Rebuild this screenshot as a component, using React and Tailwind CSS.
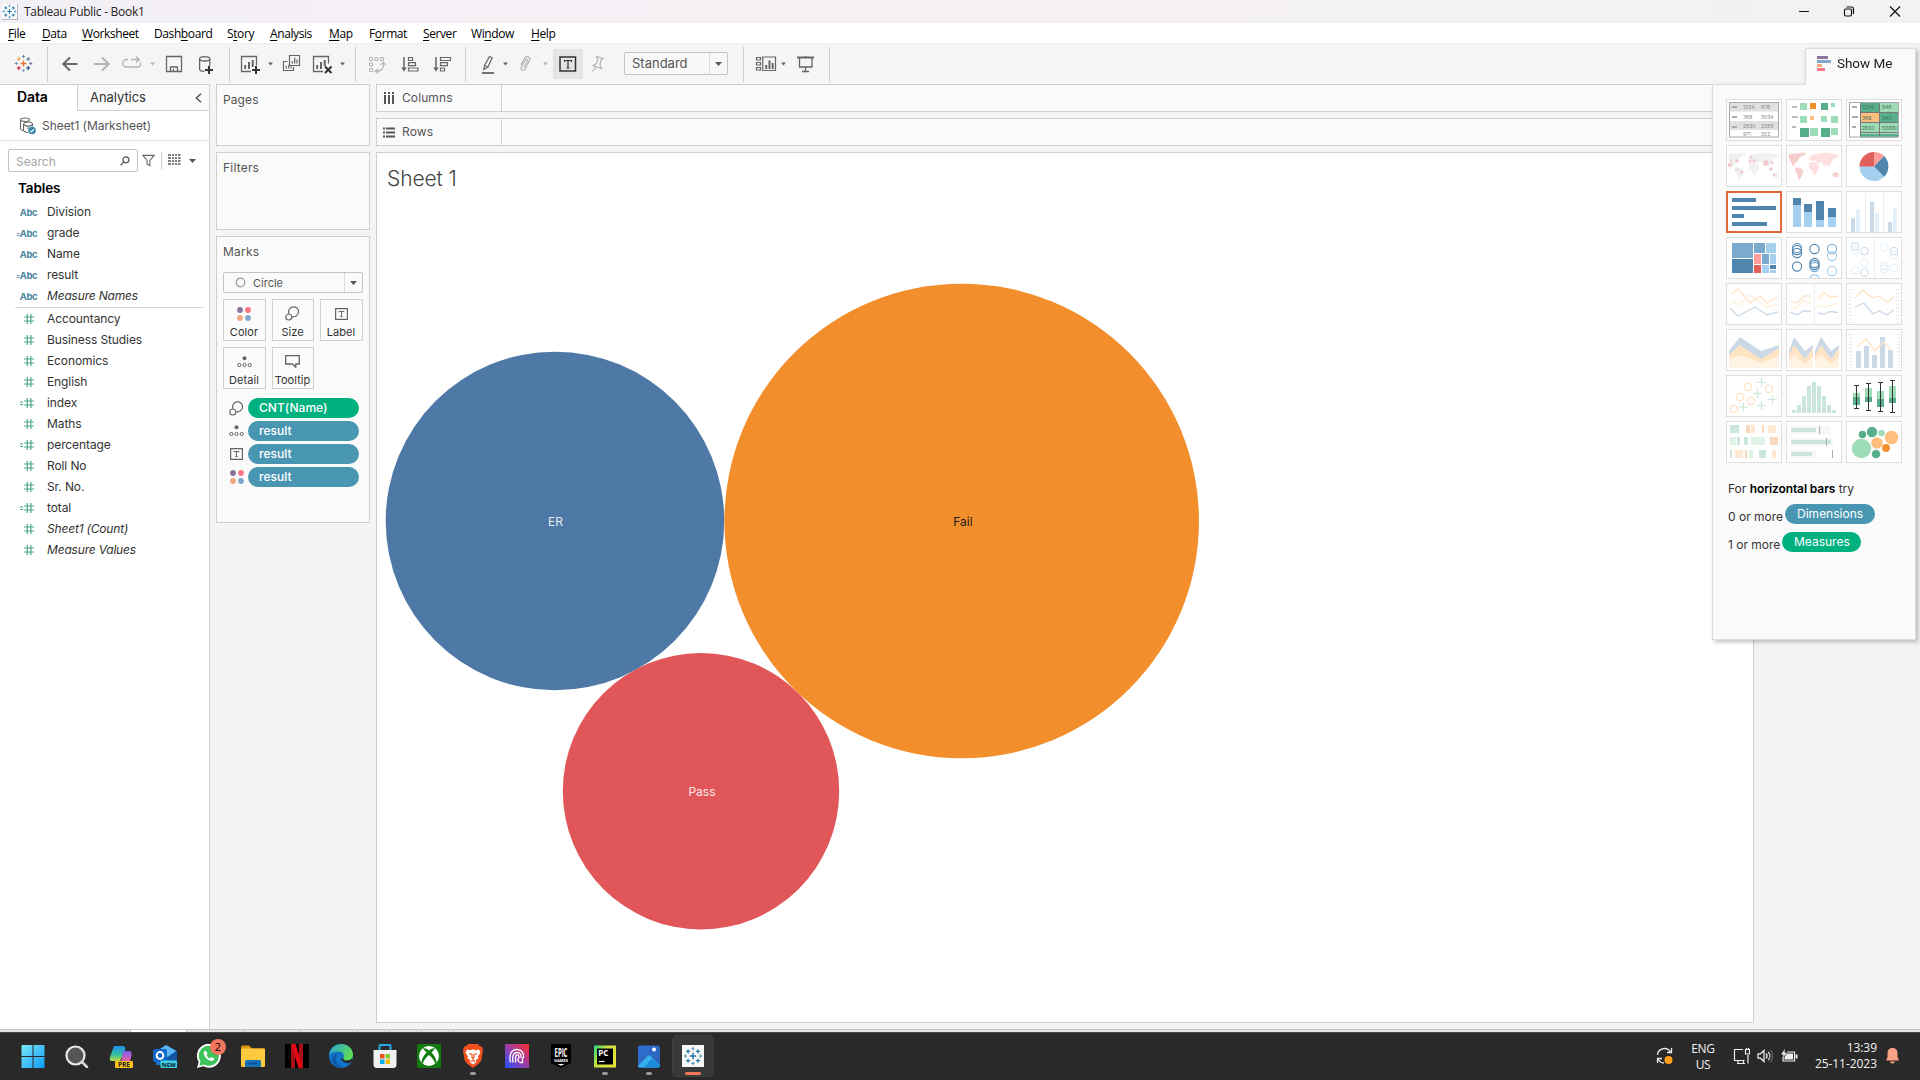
import React from "react";

const G = "#666666";
const L = "#b4b4b4";

/* ---------- toolbar ---------- */

// One slot of the toolbar strip; x is the slot's left edge, drawings use window coordinates.
function Slot({ x, w, children }) {
  return (
    <svg className="block shrink-0" width={w} height="41" viewBox={`${x} 43 ${w} 41`} fill="none">
      {children}
    </svg>
  );
}
const Caret = ({ x, y = 62.5, c = G }) => <path d={`M${x} ${y}h5l-2.5 3z`} fill={c} />;
const Sep = () => <div className="mt-[4px] h-[35px] w-px shrink-0 bg-[#cdcdcd]" />;

function Spark({ cx, cy, r, c, w = 1.2 }) {
  return <path d={`M${cx - r} ${cy}H${cx + r}M${cx} ${cy - r}V${cy + r}`} stroke={c} strokeWidth={w} />;
}

function TableauMark({ cx, cy, s = 1, colors }) {
  const c = colors;
  return (
    <g transform={`translate(${cx} ${cy}) scale(${s})`} fill="none">
      <Spark cx={0} cy={0} r={3} c={c[0]} w={1.4} />
      <Spark cx={-4.7} cy={-4.5} r={2} c={c[1]} />
      <Spark cx={4.7} cy={-4.5} r={2} c={c[2]} />
      <Spark cx={-4.7} cy={4.5} r={2} c={c[3]} />
      <Spark cx={4.7} cy={4.5} r={2} c={c[4]} />
      <Spark cx={0} cy={-7} r={1.6} c={c[5]} w={1} />
      <Spark cx={0} cy={7} r={1.6} c={c[6]} w={1} />
      <Spark cx={-7.2} cy={0} r={1.6} c={c[7]} w={1} />
      <Spark cx={7.2} cy={0} r={1.6} c={c[8]} w={1} />
    </g>
  );
}
const BLUES = ["#2b79a8", "#2b79a8", "#2b79a8", "#2b79a8", "#2b79a8", "#5b9bc0", "#5b9bc0", "#5b9bc0", "#5b9bc0"];
const BRAND = ["#e8762d", "#e9a04a", "#5b879b", "#c72035", "#1f457e", "#6a8cae", "#8aa0c0", "#5b9aa8", "#7a6fa0"];

function Toolbar() {
  return (
    <div className="-mb-px flex h-[41px] shrink-0 border-t border-[#ececec] bg-[#f5f5f5]">
      <div className="-mt-px flex">
        <Slot x={0} w={47}>
          <TableauMark cx={23.5} cy={63.5} s={1} colors={BRAND} />
        </Slot>
        <Sep />
        <Slot x={48} w={181}>
          <path d="M77.5 64H63.500M70 57.500L63.300 64l6.700 6.500" stroke={G} strokeWidth="2" />
          <path d="M94 64h14.500M102 57.500l6.700 6.500-6.700 6.500" stroke={L} strokeWidth="2" />
          <path d="M128 59.500h-1.500a3.500 3.500 0 0 0 0 7.500h11a3 3 0 0 0 2.800-4.500M131 59.500h8M136 56.500l3.200 3-3.200 3" stroke={L} strokeWidth="1.400" />
          <Caret x={150} c={L} />
          <path d="M166.500 56.500h15v15h-15zM170.500 71.500v-4.500h7v4.500M173.500 71v-2" stroke={G} strokeWidth="1.300" />
          <path d="M199.600 58.800v10.400c0 1.400 2 2 4.800 2.200M209.800 58.800V66" stroke={G} strokeWidth="1.300" />
          <ellipse cx="204.700" cy="58.800" rx="5.100" ry="2.200" stroke={G} strokeWidth="1.300" />
          <path d="M205 70h8M209 66v8" stroke="#333" strokeWidth="2" />
        </Slot>
        <Sep />
        <Slot x={230} w={125}>
          <path d="M251 71.500h-9.500v-15h15v9" stroke={G} strokeWidth="1.300" />
          <path d="M245.200 69v-4M249 69v-7M252.700 67v-7" stroke={G} strokeWidth="2" />
          <path d="M252 70h8M256 66v8" stroke="#333" strokeWidth="2" />
          <Caret x={268} />
          <path d="M289.500 55.500h10v10h-10zM287.500 61.500h-4v9h10v-3.500" stroke={G} strokeWidth="1.200" />
          <path d="M292.300 63.500v-2.500M294.700 63.500v-6M297 63.500v-4M286.300 68.500v-2.500M288.700 68.500v-3.500M291 68.500v-2" stroke={G} strokeWidth="1.200" />
          <path d="M323 71.500h-9.500v-15h15v7" stroke={G} strokeWidth="1.300" />
          <path d="M317.200 69v-4M321 69v-7M324.700 66v-6" stroke={G} strokeWidth="2" />
          <path d="M325 66.500l6.500 6.500M331.500 66.500L325 73" stroke="#333" strokeWidth="2" />
          <Caret x={340} />
        </Slot>
        <Sep />
        <Slot x={356} w={109}>
          <path d="M369.500 57.500h3v3h-3zM375 57.500h3v3h-3zM380.500 57.500h3v3h-3zM369.500 63h3v3h-3zM369.500 68.500h3v3h-3z" stroke={L} />
          <path d="M383.500 62.500c1 5-1.500 9-8 9.200M380.800 65l2.600-2.800 2.200 2.800M378 69l-3 2.500 3 2" stroke={L} strokeWidth="1.200" />
          <path d="M404 57v12" stroke={G} strokeWidth="1.500" />
          <path d="M401.200 67.500h5.600l-2.800 4z" fill={G} />
          <path d="M408.500 57.500h4v3h-4zM408.500 62.700h7v3h-7zM408.500 68h9.500v3h-9.500z" stroke={G} strokeWidth="1.200" />
          <path d="M436 57v12" stroke={G} strokeWidth="1.500" />
          <path d="M433.200 67.500h5.600l-2.800 4z" fill={G} />
          <path d="M440.500 57.500h10v3h-10zM440.500 62.700h7v3h-7zM440.500 68h4v3h-4z" stroke={G} strokeWidth="1.200" />
        </Slot>
        <Sep />
        <Slot x={466} w={87}>
          <path d="M489.500 56.500l2.700 1.200-4.200 9.300-3.500-1.500zM484.300 66l-.5 3.500 3.700-2.300" stroke={G} strokeWidth="1.200" />
          <path d="M482 73h12" stroke={G} strokeWidth="1.800" />
          <Caret x={503} />
          <path d="M521 65l3.700-7c1.500-2.500 6-1 5 2l-4.500 9c-1.200 2.300-5 1-4-1.500l4-7.500c1-1.500 3-.5 2.300 1l-3.500 6.500" stroke={L} strokeWidth="1.200" />
          <Caret x={543} c={L} />
        </Slot>
      </div>
      <div className="mt-[5px] flex h-[30px] w-[30px] items-center justify-center bg-[#e4e4e4]">
        <svg width="18" height="16" viewBox="0 0 18 16" fill="none">
          <path d="M1 1h15.500v14H1z" stroke="#333" strokeWidth="1.500" />
          <path d="M5.500 6V4.500h7V6M9 4.500v7.500M7.500 12h3" stroke="#333" strokeWidth="1.200" />
        </svg>
      </div>
      <div className="-mt-px flex">
        <Slot x={583} w={41}>
          <path d="M596.500 56.500l6.500 2-2 1.500-1 5 1.500 3.500-8.500-3 3.500-2 1.500-4.500zM596 67l-3.500 4.500" stroke={L} strokeWidth="1.200" />
        </Slot>
      </div>
      <div className="mt-[8px] flex h-[23px] w-[104px] items-center rounded-[2px] border border-[#c4c4c4] bg-[#f8f8f8]">
        <span className="w-[84px] pl-[7px] text-[13px] leading-none text-[#555]">Standard</span>
        <span className="flex h-full flex-1 items-center justify-center border-l border-[#dcdcdc]">
          <svg width="7" height="4" viewBox="0 0 7 4"><path d="M0 0h7L3.500 4z" fill="#555" /></svg>
        </span>
      </div>
      <div className="-mt-px ml-[15px] flex">
        <Sep />
        <Slot x={744} w={85}>
          <path d="M756.500 57.500h4v2.500h-4zM756.500 62.500h4v2.500h-4zM756.500 67.500h4v2.500h-4zM762.700 57h12.800v13.500h-12.800z" stroke={G} strokeWidth="1.200" />
          <path d="M766.200 69v-4M769.500 69v-8.500M772.700 69v-6" stroke={G} strokeWidth="2" />
          <Caret x={781} />
          <path d="M797 57.500h17" stroke={G} strokeWidth="2" />
          <path d="M799.500 58v9h12.500v-9M805.500 56v1M805.500 67v4.500M802 71.500h7" stroke={G} strokeWidth="1.300" />
        </Slot>
        <Sep />
      </div>
    </div>
  );
}

/* ---------- menu ---------- */

const MENU = [
  ["", "F", "ile", "w-[34px]"],
  ["", "D", "ata", "w-[40px]"],
  ["", "W", "orksheet", "w-[72px]"],
  ["Dash", "b", "oard", "w-[73px]"],
  ["S", "t", "ory", "w-[43px]"],
  ["", "A", "nalysis", "w-[59px]"],
  ["", "M", "ap", "w-[40px]"],
  ["F", "o", "rmat", "w-[54px]"],
  ["", "S", "erver", "w-[48px]"],
  ["Wi", "n", "dow", "w-[60px]"],
  ["", "H", "elp", "w-[40px]"],
];

/* ---------- data pane ---------- */

const DIMS = [[0, "Division"], [1, "grade"], [0, "Name"], [1, "result"], [0, "Measure Names", 1]];
const MEAS = [
  [0, "Accountancy"], [0, "Business Studies"], [0, "Economics"], [0, "English"], [1, "index"], [0, "Maths"],
  [1, "percentage"], [0, "Roll No"], [0, "Sr. No."], [1, "total"], [0, "Sheet1 (Count)", 1], [0, "Measure Values", 1],
];

function Field({ icon, name, italic }) {
  return (
    <div className="flex h-[21px] items-center">
      <div className="flex w-[37px] justify-end">{icon}</div>
      <span className={italic ? "ml-[10px] text-[12px] italic tracking-[-0.18px] text-[#333]" : "ml-[10px] text-[12px] tracking-[-0.1px] text-[#333]"}>{name}</span>
    </div>
  );
}

function DataPane() {
  return (
    <div className="flex w-[210px] shrink-0 flex-col border-r border-t border-[#d0d0d0] bg-white">
      <div className="flex h-[26px]">
        <div className="w-[77px] pl-[17px] text-[14px] font-semibold leading-[24px] tracking-[-0.1px] text-black">Data</div>
        <div className="flex flex-1 items-center justify-between border-b border-l border-[#d0d0d0] bg-[#fafafa] pl-[12px] pr-[7px]">
          <span className="text-[13px] leading-none tracking-[-0.05px] text-[#333]">Analytics</span>
          <svg width="7" height="10" viewBox="0 0 7 10" fill="none"><path d="M6 .7L1.300 5 6 9.300" stroke="#555" strokeWidth="1.500" /></svg>
        </div>
      </div>
      <div className="flex h-[30px] items-center border-b border-[#e0e0e0] pl-[19px]">
        <svg width="18" height="18" viewBox="0 0 18 18" fill="none" stroke="#666" strokeWidth="1.100">
          <ellipse cx="6" cy="2.800" rx="4.500" ry="1.800" />
          <path d="M1.500 3v8.500c0 1 1 1.700 2.500 2M4.500 8c0-2 2-3 5-3s4 1 4 2.500v2M4.500 8v5c0 1.500 2 2.300 4.500 2.500M5 8c2 1.500 6 1.500 8 0M8 11h2" />
          <circle cx="13" cy="13.500" r="3.800" fill="#3a87a8" stroke="none" />
          <path d="M11.200 13.500l1.300 1.400 2.400-2.700" stroke="#fff" />
        </svg>
        <span className="ml-[5px] text-[12px] tracking-[-0.05px] text-[#555]">Sheet1 (Marksheet)</span>
      </div>
      <div className="mt-[8px] flex h-[23px] items-center pl-[8px]">
        <div className="flex h-[23px] w-[130px] items-center justify-between rounded-[2px] border border-[#c4c4c4] pl-[7px] pr-[7px]">
          <span className="pt-[2px] text-[12px] leading-none text-[#a5a5a5]">Search</span>
          <svg width="10" height="10" viewBox="0 0 11 11" fill="none" stroke="#555" strokeWidth="1.300"><circle cx="6.500" cy="4.200" r="3.300" /><path d="M4.200 6.700L.8 10.200" /></svg>
        </div>
        <svg className="ml-[4px]" width="13" height="13" viewBox="0 0 14 13" fill="none" stroke="#666" strokeWidth="1.200"><path d="M1 1h12L8.500 6.500V12l-3-1.500v-4z" /></svg>
        <div className="ml-[6px] h-[18px] w-px bg-[#d0d0d0]" />
        <svg className="-mt-[2px] ml-[6px]" width="13" height="11" viewBox="0 0 13 11"><path d="M0 1h3M0 4h3M0 7h3M0 10h3M4 1h2M4 4h2M4 7h2M4 10h2M7 1h2M7 4h2M7 7h2M7 10h2M10 1h2.500M10 4h2.500M10 7h2.500M10 10h2.500" stroke="#555" strokeWidth="1.300" /></svg>
        <svg className="ml-[8px]" width="7" height="4" viewBox="0 0 7 4"><path d="M0 0h7L3.500 4z" fill="#555" /></svg>
      </div>
      <div className="mt-[5px] h-[24px] pl-[18px] text-[13.5px] font-semibold leading-[22px] tracking-[-0.1px] text-black">Tables</div>
      {DIMS.map(([c, n, i]) => (
        <Field
          key={n}
          name={n}
          italic={i}
          icon={
            <span className="flex items-center pt-[2px] font-bold leading-none tracking-[-0.5px] text-[#4a87a0]">
              {c ? <span className="text-[6px]">=</span> : null}
              <span className="text-[9.5px]">Abc</span>
            </span>
          }
        />
      ))}
      <div className="ml-[15px] mr-[6px] mt-px h-px bg-[#d8d8d8]" />
      <div>
        {MEAS.map(([c, n, i]) => (
          <Field
            key={n}
            name={n}
            italic={i}
            icon={
              <svg className="mr-[3px] mt-px" width="14" height="10" viewBox="0 0 14 10" stroke="#4fa888" strokeWidth="1.200">
                <path d="M4 3h10M4 7h10M7.300 0v10M10.900 0v10" />
                {c ? <path d="M0 4h3M0 6.500h3" strokeWidth="1" /> : null}
              </svg>
            }
          />
        ))}
      </div>
    </div>
  );
}

/* ---------- cards ---------- */

const ColorIcon = () => (
  <svg width="14" height="14" viewBox="0 0 14 14">
    <circle cx="3" cy="3" r="2.900" fill="#89739b" /><circle cx="11" cy="3" r="2.900" fill="#fb7583" />
    <circle cx="3" cy="11" r="2.900" fill="#f3a67e" /><circle cx="11" cy="11" r="2.900" fill="#83a6cd" />
  </svg>
);
const SizeIcon = () => (
  <svg width="15" height="15" viewBox="0 0 15 15" fill="none" stroke="#666" strokeWidth="1.200">
    <path d="M4 7.800A5 5 0 1 1 7.200 10.600" /><circle cx="3.800" cy="11" r="3" />
  </svg>
);
const LabelIcon = () => (
  <svg width="13" height="12" viewBox="0 0 13 12" fill="none" stroke="#666">
    <path d="M.6.6h11.800v10.800H.6z" strokeWidth="1.200" /><path d="M4 4.300V3.500h5v.8M6.500 3.500v5M5.300 8.500h2.400" />
  </svg>
);
const DetailIcon = () => (
  <svg width="15" height="12" viewBox="0 0 15 12" fill="none" stroke="#666">
    <circle cx="7.500" cy="2.200" r="2" fill="#666" stroke="none" /><circle cx="2.300" cy="9" r="1.600" /><circle cx="7.500" cy="9" r="1.600" /><circle cx="12.700" cy="9" r="1.600" />
  </svg>
);
const TooltipIcon = () => (
  <svg width="15" height="13" viewBox="0 0 15 13" fill="none" stroke="#666" strokeWidth="1.300">
    <path d="M.7.700h13.600v8.300h-3.500v3.300L7.500 9H.7z" />
  </svg>
);

function MarkButton({ icon, label }) {
  return (
    <div className="flex h-[42px] flex-col items-center border border-[#cfcfcf] bg-[#fbfbfb] pr-px">
      <div className="mt-[5px] flex h-[17px] items-center">{icon}</div>
      <div className="mt-[4px] text-[11px] leading-[13px] tracking-[0.05px] text-[#333]">{label}</div>
    </div>
  );
}

function Pill({ icon, text, green }) {
  return (
    <div className="flex h-[20px] items-center">
      <div className="flex w-[25px] items-center pl-[6px]">
        <div className="flex w-[15px] shrink-0 justify-center">{icon}</div>
      </div>
      <div className={green ? "h-[20px] w-[111px] rounded-full bg-[#00b180] pl-[11px] text-[12px] font-medium leading-[20px] tracking-[0.05px] text-white" : "h-[20px] w-[111px] rounded-full bg-[#4996b2] pl-[11px] text-[12px] font-medium leading-[20px] tracking-[0.05px] text-white"}>{text}</div>
    </div>
  );
}

function Cards() {
  return (
    <div className="ml-[6px] flex w-[154px] shrink-0 flex-col gap-[6px] text-[12px] text-[#555]">
      <div className="h-[62px] border border-[#cfcfcf] bg-[#fafafa] pl-[6px] pt-[6px] leading-[18px] tracking-[0.1px]">Pages</div>
      <div className="h-[78px] border border-[#cfcfcf] bg-[#fafafa] pl-[6px] pt-[6px] leading-[18px] tracking-[0.2px]">Filters</div>
      <div className="h-[287px] border border-[#cfcfcf] bg-[#fafafa] pl-[6px] pt-[6px]">
        <div className="leading-[18px] tracking-[0.2px]">Marks</div>
        <div className="mt-[11px] flex h-[21px] w-[140px] items-center rounded-[2px] border border-[#c4c4c4]">
          <svg className="ml-[11px]" width="11" height="11" viewBox="0 0 11 11" fill="none"><circle cx="5.500" cy="5.500" r="4.300" stroke="#999" strokeWidth="1.200" /></svg>
          <span className="ml-[7px] w-[91px] pt-[2px] text-[11px] leading-none">Circle</span>
          <span className="flex h-full w-[18px] shrink-0 items-center justify-center border-l border-[#dcdcdc]">
            <svg width="7" height="4" viewBox="0 0 7 4"><path d="M0 0h7L3.500 4z" fill="#555" /></svg>
          </span>
        </div>
        <div className="mt-[6px] grid w-[140px] grid-cols-[43px_42px_43px] gap-[6px]">
          <MarkButton icon={<ColorIcon />} label="Color" />
          <MarkButton icon={<SizeIcon />} label="Size" />
          <MarkButton icon={<LabelIcon />} label="Label" />
          <MarkButton icon={<DetailIcon />} label="Detail" />
          <MarkButton icon={<TooltipIcon />} label="Tooltip" />
        </div>
        <div className="mt-[9px] flex flex-col gap-[3px]">
          <Pill icon={<SizeIcon />} text="CNT(Name)" green />
          <Pill icon={<DetailIcon />} text="result" />
          <Pill icon={<LabelIcon />} text="result" />
          <Pill icon={<ColorIcon />} text="result" />
        </div>
      </div>
    </div>
  );
}

/* ---------- worksheet ---------- */

function Shelf({ icon, label }) {
  return (
    <div className="flex h-[28px] border border-[#cfcfcf] bg-[#fafafa]">
      <div className="flex w-[125px] items-center border-r border-[#cfcfcf] pl-[6px]">
        {icon}
        <span className="ml-[7px] text-[12px] tracking-[0.1px] text-[#555]">{label}</span>
      </div>
    </div>
  );
}

function Bubbles() {
  return (
    <svg className="block" width="1000" height="740" viewBox="377 213 1000 740">
      <circle cx="555" cy="521" r="169.300" fill="#4e79a7" />
      <circle cx="961.700" cy="521" r="237.300" fill="#f28e2b" />
      <circle cx="701" cy="791.200" r="138.200" fill="#e15759" />
      <g fontSize="12" textAnchor="middle">
        <text x="555.500" y="526" fill="#e6ecf2">ER</text>
        <text x="963" y="526" fill="#222">Fail</text>
        <text x="702" y="796" fill="#fbe6e6">Pass</text>
      </g>
    </svg>
  );
}

function Sheet() {
  return (
    <div className="ml-[6px] flex w-[1378px] shrink-0 flex-col">
      <Shelf label="Columns" icon={<svg width="12" height="12" viewBox="0 0 12 12"><path d="M2 0v2M6 0v2M10 0v2M2 3v9M6 3v9M10 3v9" stroke="#555" strokeWidth="2" /></svg>} />
      <div className="mt-[6px]">
        <Shelf label="Rows" icon={<svg width="12" height="11" viewBox="0 0 12 11"><path d="M0 1.500h2M0 5.500h2M0 9.500h2M3 1.500h9M3 5.500h9M3 9.500h9" stroke="#555" strokeWidth="2" /></svg>} />
      </div>
      <div className="mt-[6px] h-[871px] border border-[#cfcfcf] bg-white">
        <div className="h-[60px] pl-[10px] pt-[11px] text-[21px] font-light leading-[29px] tracking-[-0.1px] text-[#444]">Sheet 1</div>
        <Bubbles />
      </div>
    </div>
  );
}

/* ---------- Show Me ---------- */

const R = ({ x, y, w, h, c }) => <rect x={x} y={y} width={w} height={h} fill={c} />;
const rects = (list) => list.map(([x, y, w, h, c], i) => <R key={i} x={x} y={y} w={w} h={h} c={c} />);
const DG = "#57ae8a", LG = "#9edcb7", OR = "#f28e2b", LO = "#ffbe7d", DB = "#5085ae", LB = "#a5d0f0", MB = "#7baacf";
const FB = "#cbd9e7", FO = "#ffe3c5", FY = "#fff0d8", FG = "#cbe6da";

const WEST =
  "M2 10l4-1.500h6l3-.5 4-.5 1 1.500-2 2-2-.5-1 1.500-2 1-1 3-3 2-1 1.500 2 2.500-3-1.500-3-5-1-3zM9.500 22.500h4l4 3-1 4-3 5.500-1.500-1-.5-5-2.500-3zM46 29l3-2 3 1 1 3-2 1.500-4-1z";
const EAST =
  "M23 18l5-1 4 2 1.500 3-1.500 3-2 4-2.500 1.500-1.500-5-3-2zM22.500 14l3-4 5-1 8-1.500 8 1 6 1.500-2 3-3 1-1 3-3 2v3l-2-1-1-2.500-2 4-2-4.500-3-1-1 2-3-3-4-.5z";

function WorldMap({ west, east, dots }) {
  return (
    <g>
      <path d={WEST} fill={west} />
      <path d={EAST} fill={east} />
      {dots}
    </g>
  );
}

const nums = (list, c) =>
  list.map(([x, y, t]) => (
    <text key={t} x={x} y={y} fontSize="5" fill={c}>{t}</text>
  ));

const lineSet = (d, c, w = 1.3) => <path d={d} stroke={c} strokeWidth={w} fill="none" />;
const rings = (pts, c) => pts.map(([x, y, k], i) => <circle key={i} cx={x} cy={y} r={c.r} fill="none" stroke={k || c.k} strokeWidth="1.100" />);

const THUMBS = [
  <g>
    {rects([[3.5, 3.5, 49, 9, "#e0e0e0"], [3.5, 22, 49, 9, "#e0e0e0"], [6, 7, 5, 2, "#aaa"], [6, 17, 5, 2, "#aaa"], [6, 27, 5, 2, "#aaa"]])}
    <rect x="3.500" y="3.500" width="49" height="34.500" fill="none" stroke="#aaa" />
    {nums([[17, 10, "1234"], [35, 10, "678"], [17, 19.5, "368"], [35, 19.5, "3034"], [17, 28.5, "2620"], [35, 28.5, "2559"], [17, 36.5, "971"], [35, 36.5, "322"]], "#888")}
  </g>,
  <g>
    {rects([[6, 7, 5, 2, "#bbb"], [6, 17, 6, 2, "#bbb"], [6, 27, 4, 2, "#bbb"], [14, 4, 7, 7, LG], [24, 4, 6, 6, OR], [35, 4, 7, 7, DG], [45, 4, 4, 4, LG], [14, 17, 7, 7, LG], [24, 17, 4, 4, LO], [35, 17, 6, 6, LG], [45, 17, 7, 7, LG], [14, 29, 9, 9, DG], [24, 29, 8, 8, LG], [35, 29, 9, 9, DG], [45, 29, 7, 7, LG]])}
  </g>,
  <g>
    {rects([[14, 3.5, 20, 10, DG], [34, 3.5, 18, 10, LG], [14, 14, 20, 9.5, LO], [34, 14, 18, 9.5, DG], [14, 24, 38, 10, LG], [14, 34.5, 20, 4, DG], [34, 34.5, 18, 4, DG], [6, 7, 5, 2, "#aaa"], [6, 17, 6, 2, "#aaa"], [6, 27, 4, 2, "#aaa"]])}
    <path d="M14.500 3.500v34.500M33.500 3.500v34.500M14 13.500h38.500M14 23.500h38.500M14 33.500h38.500" stroke="#777" />
    <rect x="3.500" y="3.500" width="49" height="34.500" fill="none" stroke="#aaa" />
    {nums([[16, 10, "1234"], [36, 10, "546"], [16, 20.5, "368"], [36, 20.5, "340"], [16, 30.5, "2620"], [36, 30.5, "53890"]], "#3f6f59")}
  </g>,
  <WorldMap west="#efefef" east="#f1f1f1" dots={[[4, 20, 2.2], [5, 16, 1.2], [11, 16, 1.8], [24, 16, 1.5], [25, 12, 1.5], [28, 16, 1.7], [40, 18, 2.7], [46, 18, 1.5], [45, 24, 1.8], [10, 25, 1.2], [16, 27, 1.5], [48, 30, 1.2]].map(([x, y, r], i) => <circle key={i} cx={x} cy={y} r={r} fill="#f0c8cb" />)} />,
  <WorldMap west="#f6cfcc" east="#fde0df" />,
  <g>
    <path d="M28 21.500V7a14.500 14.500 0 0 1 10 4.100z" fill="#ff9d9a" />
    <path d="M28 21.500L38 11.100a14.500 14.500 0 0 1 0 20.800z" fill={DB} />
    <path d="M28 21.500L38 31.900A14.500 14.500 0 0 1 13.500 21z" fill={LB} />
    <path d="M28 21.500H13.500A14.500 14.500 0 0 1 28 7z" fill="#e15f5a" />
  </g>,
  <g>{rects([[6, 7, 24, 4, DB], [6, 15, 44, 4, DB], [6, 23, 12, 4, DB], [6, 31, 35, 4, DB]])}</g>,
  <g>{rects([[7, 7, 8, 7, DB], [7, 14, 8, 22, LB], [18, 13, 8, 8, DB], [18, 21, 8, 15, LB], [30, 10, 8, 19, DB], [30, 29, 8, 7, LB], [42, 17, 8, 9, DB], [42, 26, 8, 10, LB]])}</g>,
  <g>{rects([[19, 1, 1, 40, "#eee"], [37, 1, 1, 40, "#eee"], [5, 27, 4, 14, FB], [10, 18, 4, 23, "#e2f0fb"], [24, 11, 4, 30, FB], [29, 22, 4, 19, "#e2f0fb"], [42, 31, 4, 10, FB], [47, 17, 4, 24, "#e2f0fb"]])}</g>,
  <g>{rects([[6, 6, 21, 15, MB], [6, 22, 21, 14, DB], [28, 6, 11, 10, MB], [40, 6, 10, 10, LB], [28, 17, 7, 10, "#ff9d9a"], [36, 17, 7, 10, MB], [44, 17, 6, 10, LB], [28, 28, 7, 8, "#e15f5a"], [36, 28, 7, 8, LB], [44, 28, 6, 4, DB], [44, 33, 6, 3, LB]])}</g>,
  <g>
    {rings([[11, 11, MB], [11, 13], [11, 16], [11, 29.5], [28.5, 12], [28.5, 26], [28.5, 30, MB], [28.5, 28], [46, 12, MB], [46, 19, LB], [46, 34, LB]], { r: 4.6, k: DB })}
    <path d="M24 41a4.700 4.700 0 0 1 9 0" fill="none" stroke={LB} strokeWidth="1.100" />
  </g>,
  <g>
    {rects([[28, 1, 1, 40, "#eee"]])}
    {rings([[9, 9.5], [9, 13, "#e2f0fb"], [18.5, 14], [18.5, 26, "#e2f0fb"], [9, 33.5, "#e2f0fb"], [18.5, 35.5], [38.5, 10, "#e2f0fb"], [48, 14], [48, 18, "#e2f0fb"], [38.5, 29, "#d8e6f3"], [38.5, 32, "#e2f0fb"], [48, 31, "#e2f0fb"]], { r: 3.7, k: FB })}
  </g>,
  <g>
    {lineSet("M5 11.500L12 6l12 14 10-7 7 7 11-6", FO)}
    {lineSet("M5 18l8 4 11-10 17 12 10-2.500", FY)}
    {lineSet("M4 25l8 8 17-9 12 8 11-3", FB)}
  </g>,
  <g>
    {rects([[28, 1, 1, 40, "#eee"]])}
    {lineSet("M4 18l7 2 6.500-7H25M32 16l6-6.500 6 4.500 8-1", FO)}
    {lineSet("M4 24l7 1 6-8 8 4M32 22l6 2 6-1 8-3", FY)}
    {lineSet("M4 29l7 3 6-4h8M32 30l6 1 6-2.500 8 1", FB)}
  </g>,
  <g>
    {lineSet("M9 15l8-8 9 8 6-2 10 6 6-6", FO)}
    {lineSet("M9 24l9-4 9 11 6-3 8 4 7-5", FB)}
    <path d="M4 6v34M51.500 6v34" stroke="#e6e6e6" strokeWidth="3" strokeDasharray="1 2.700" />
  </g>,
  <g>
    <path d="M3 22L14 8l21 14 18-6v23H3z" fill={FB} />
    <path d="M3 26l11-10 21 14 18-11v20H3z" fill={FO} />
    <path d="M3 30l11-4 21 8 18-7v12H3z" fill="#fff4e4" />
  </g>,
  <g>
    <path d="M3 22L8 8l11 14 8-6v23H3zM29 22l6-14 10 14 8-6v23H29z" fill={FB} />
    <path d="M3 26l5-10 11 14 8-11v20H3zM29 26l6-10 10 14 8-11v20H29z" fill={FO} />
    <path d="M3 31l5-5 11 9 8-7v11H3zM29 31l6-5 10 9 8-7v11H29z" fill="#fff4e4" />
  </g>,
  <g>
    {rects([[10, 22, 5, 17, FB], [18, 17, 5, 22, FB], [26, 26, 5, 13, FB], [34, 8, 5, 31, FB], [42, 21, 5, 18, FB]])}
    {lineSet("M11 18l9-8 9 12 8-9 9 9", FO)}
    <path d="M4.500 5v33M52.500 5v33" stroke="#e6e6e6" strokeWidth="3" strokeDasharray="1 2.400" />
  </g>,
  <g>
    {rings([[22, 12], [43, 14], [14, 22], [25, 26], [8, 34]], { r: 3.6, k: "#ffdfbf" })}
    {[[35.5, 7.5], [31.5, 18.5], [46.5, 24.5], [17.5, 32], [35.5, 30.5]].map(([x, y]) => <Spark key={x + y} cx={x} cy={y} r={4.5} c={FG} w={1.2} />)}
  </g>,
  <g>{rects([[6, 35, 4, 3, FG], [11, 30, 4, 8, FG], [16, 21, 4, 17, FG], [21, 11, 4, 27, FG], [26, 7, 4, 31, FG], [31, 11, 4, 27, FG], [36, 21, 4, 17, FG], [41, 30, 4, 8, FG], [46, 35, 4, 3, FG]])}</g>,
  <g>
    {rects([[7, 18, 7, 4, LG], [7, 22, 7, 8, DG], [19, 13, 7, 9, LG], [19, 22, 7, 5, DG], [31, 16, 7, 8, LG], [31, 24, 7, 8, DG], [43, 11, 7, 12, LG], [43, 23, 7, 5, DG]])}
    <path d="M10.500 10v24M22.500 8.500V35.500M34.500 7v29.500M46.500 5.500V37.500M8 10.500h5M8 33.500h5M20 8.500h5M20 35.500h5M32 7.500h5M32 36.500h5M44 5.500h5M44 37.500h5" stroke="#333" />
  </g>,
  <g>{rects([[4, 4, 9, 8, FG], [20, 4, 4, 8, "#f9d9bd"], [25, 4, 4, 8, "#ffe9d2"], [36, 4, 2, 8, "#f9d9bd"], [42, 4, 8, 8, "#ffe9d2"], [4, 16, 6, 8, "#dff2e6"], [11, 16, 3, 8, FG], [18, 16, 4, 8, FG], [25, 16, 14, 8, "#dff2e6"], [44, 16, 8, 8, "#f9d9bd"], [4, 29, 2, 8, FG], [9, 29, 8, 8, "#ffe9d2"], [19, 29, 2, 8, "#f9d9bd"], [23, 29, 4, 8, "#dff2e6"], [33, 29, 7, 8, FG], [46, 29, 4, 8, "#ffe9d2"]])}</g>,
  <g>{rects([[5, 5, 40, 8, "#f7f7f7"], [5, 17, 42, 8, "#f7f7f7"], [5, 29, 25, 8, "#f7f7f7"], [5, 7, 25, 4, FG], [5, 19, 40, 4, FG], [5, 31, 21, 4, FG], [33, 5, 1, 8, "#aaa"], [40, 17, 1, 8, "#aaa"], [46, 29, 1, 8, "#aaa"]])}</g>,
  <g>
    {[[15.5, 27.5, 9.7, LG], [16.5, 13.5, 3.7, DG], [26, 11, 5.2, DG], [35.5, 12, 3.3, LG], [45.5, 16.5, 6.8, LO], [31, 22, 5.8, LO], [40, 27, 3.9, OR], [30, 33, 4.3, DG]].map(([x, y, r, c], i) => <circle key={i} cx={x} cy={y} r={r} fill={c} />)}
  </g>,
];

function ShowMe() {
  return (
    <div className="absolute left-[1712px] top-[48px] flex w-[204px] flex-col drop-shadow-[2px_2px_2px_rgba(0,0,0,0.25)]">
      <div className="relative z-10 -mb-px flex h-[37px] w-[111px] items-start self-end border border-b-0 border-[#dcdcdc] bg-[#fafafa] pl-[11px]">
        <svg className="mt-[7px]" width="14" height="16" viewBox="0 0 14 16">{rects([[0, 0, 11, 3, "#89739b"], [0, 4, 14, 3, "#83a6cd"], [0, 8, 5, 3, "#f3a67e"], [0, 12, 8, 3, "#fb7583"]])}</svg>
        <span className="ml-[6px] mt-[5px] whitespace-nowrap font-['Roboto',sans-serif] text-[13.5px] leading-[19px] tracking-[-0.05px] text-[#222]">Show Me</span>
      </div>
      <div className="h-[556px] border border-[#dcdcdc] bg-[#fafafa] pl-[13px] pt-[14px] text-[12px] text-[#333]">
        <div className="grid w-[176px] grid-cols-3 gap-[4px]">
          {THUMBS.map((t, i) => (
            <svg key={i} width="56" height="42" viewBox="0 0 56 42">
              <rect x=".5" y=".5" width="55" height="41" fill="#fff" stroke="#dedede" />
              {t}
              {i === 6 ? <rect x="1" y="1" width="54" height="40" fill="none" stroke="#e0683a" strokeWidth="2" /> : null}
            </svg>
          ))}
        </div>
        <div className="mt-[17px] pl-[2px] leading-[18px]">For <b className="font-semibold tracking-[-0.1px] text-black">horizontal bars</b> try</div>
        <div className="mt-[6px] flex items-start pl-[2px]">
          <span className="pt-[4px] leading-[18px]">0 or more</span>
          <span className="ml-[2px] h-[20px] w-[90px] rounded-full bg-[#4996b2] text-center leading-[19px] text-white">Dimensions</span>
        </div>
        <div className="mt-[6px] flex items-start pl-[2px]">
          <span className="pt-[4px] leading-[18px]">1 or more</span>
          <span className="ml-[2px] h-[20px] w-[79px] rounded-full bg-[#00b180] text-center leading-[19px] text-white">Measures</span>
        </div>
      </div>
    </div>
  );
}

/* ---------- taskbar ---------- */

const I = ({ children }) => <svg className="block" width="24" height="24" viewBox="0 0 24 24" fill="none">{children}</svg>;

const APPS = [
  <I><defs><linearGradient id="win" x1="0" y1="0" x2="1" y2="1"><stop stopColor="#7be6fb" /><stop offset="1" stopColor="#0f9cf3" /></linearGradient></defs><path d="M.5 1h11v11H.5zM12.500 1h11v11h-11zM.5 13h11v11H.5zM12.500 13h11v11h-11z" fill="url(#win)" /></I>,
  <I><circle cx="10.500" cy="11.500" r="9" fill="#555" stroke="#e8e8e8" strokeWidth="2.200" /><path d="M17 18l5 5" stroke="#d8d8d8" strokeWidth="2.500" strokeLinecap="round" /></I>,
  <I>
    <defs><linearGradient id="cp1" x1="0" y1="0" x2="0" y2="1"><stop stopColor="#1e8ff0" /><stop offset=".6" stopColor="#35c39c" /><stop offset="1" stopColor="#c6d83a" /></linearGradient><linearGradient id="cp2" x1="0" y1="0" x2="0" y2="1"><stop stopColor="#7a5cf0" /><stop offset="1" stopColor="#f2609a" /></linearGradient></defs>
    <path d="M5 2h9c2 0 3 2 2 4l-4 9c-.5 1.500-1 2-2.500 2H3c-2 0-3-1.500-2-4z" fill="url(#cp1)" />
    <path d="M14 7h6c2 0 3 1 2.500 4l-1.500 7h-9z" fill="url(#cp2)" />
    <rect x="6" y="17" width="18" height="7" rx="1" fill="#fcc419" />
    <text x="15" y="23" textAnchor="middle" fontSize="6.500" fontWeight="700" fill="#222">PRE</text>
  </I>,
  <I>
    <path d="M13 1l11 6v14H3V7z" fill="#1b74d0" /><path d="M13 1l10 6-9 6-9-6z" fill="#5cb8f0" /><path d="M24 7v14H12l-2-4z" fill="#1553a5" />
    <rect x="0" y="5" width="14" height="13" rx="1.500" fill="#1268c8" /><circle cx="7" cy="11.500" r="3.400" stroke="#fff" strokeWidth="2" />
    <rect x="7.500" y="16.500" width="16.500" height="7.500" rx="1" fill="#3fd0dd" />
    <text x="15.800" y="22.800" textAnchor="middle" fontSize="6" fontWeight="700" fill="#113">NEW</text>
  </I>,
  <div className="relative">
    <I><path d="M0 24l1.700-6A12 12 0 1 1 6.300 22.300z" fill="#fff" /><path d="M2.300 21.700l1.200-4.300a10 10 0 1 1 3.500 3.200z" fill="#3ec25a" /><path d="M8.500 6.500c-1.500.5-2 2-1.500 4 1 3 4 6 7.500 6.500 1.500 0 3-1 2.800-2.500l-2.800-1.500-1.500 1.500c-1.500-.5-3-2-3.500-3.500l1.200-1.300z" fill="#fff" /></I>
    <span className="absolute -top-[5px] left-[13px] h-[16px] w-[16px] rounded-full bg-[#f4765f] text-center text-[11px] leading-[16px] text-black">2</span>
  </div>,
  <I><path d="M0 3.500C0 2 1 1.500 2 1.500h6l3 3H24V10H0z" fill="#d99b0c" /><rect y="4.500" width="24" height="18.500" rx="1.500" fill="#fdca3f" /><path d="M4 23v-5c0-1.500.8-2 2-2h12c1.200 0 2 .5 2 2v5z" fill="#1470b8" /><path d="M8 19.500h8" stroke="#0c4f8c" strokeWidth="1.500" /></I>,
  <I><path d="M0 0h24v24H0z" fill="#000" /><path d="M6 0h4v24H6zM14 0h4v24h-4z" fill="#a90f17" /><path d="M6 0h4.500L18 24h-4.500z" fill="#e50914" /></I>,
  <I>
    <defs><linearGradient id="ed" x1="0" y1="0" x2="1" y2=".4"><stop stopColor="#2a9fdd" /><stop offset="1" stopColor="#5bdc55" /></linearGradient></defs>
    <circle cx="12" cy="12" r="12" fill="#1172c6" /><path d="M0 11C1 4 6 0 12 0c7 0 12 5 12 10.500 0 4-3 6-6 6-3.500 0-4.500-1.500-3.500-3C16 11 14 7.500 9.500 7.500 5 7.500 1 9 0 11z" fill="url(#ed)" />
    <path d="M9 9c-4 3-3.500 12 6 14-4 1.500-9-.5-11-4-2-4 0-9 5-10z" fill="#0c5aa6" /><path d="M14.500 13.500c-1 1.500 0 3 3.500 3 2 0 4-.8 5-2.200l.5 1.200c-.3 1-1 2.200-1.800 3-4 1.500-9.200-.5-9.200-4z" fill="#292929" />
  </I>,
  <I><path d="M6.500 6V2c0-.6.400-1 1-1h9c.6 0 1 .4 1 1v4" stroke="#29a9e8" strokeWidth="2" /><path d="M.5 6h23v14.500a3.500 3.500 0 0 1-3.500 3.500H4A3.500 3.500 0 0 1 .5 20.500z" fill="#f1f1f1" /><path d="M7 10h4.500v4.500H7z" fill="#f1511b" /><path d="M12.500 10H17v4.500h-4.500z" fill="#80cc28" /><path d="M7 15.500h4.500V20H7z" fill="#00adef" /><path d="M12.500 15.500H17V20h-4.500z" fill="#fbbc09" /></I>,
  <I><rect width="24" height="24" rx="2" fill="#107c10" /><circle cx="12" cy="12" r="10" fill="#fff" /><path d="M6 4.500c2-.5 4 .5 6 2 2-1.500 4-2.500 6-2l-3.500 4c3 3 5 7 5 9.500L18 20c0-3-3.500-7-6-9-2.500 2-6 6-6 9l-1.500-2c0-2.500 2-6.500 5-9.500z" fill="#107c10" /></I>,
  <I><path d="M7 0h10l2 2.500 2 0 1 4-1.500 9c-.5 3-5 6-8.500 8.500C8.500 21.500 4 18.500 3.500 15.500L2 6.500l1-4 2 0z" fill="#f4501e" /><path d="M6 5.500l3 .7 3-.7 3 .7 3-.7 1.500 3-2.500 4 .5 2-3 1.500 1 2-3.500 2.500L8.500 18l1-2-3-1.500.5-2-2.500-4z" fill="#fff" /><path d="M8 9.500l3 1v3l1 1.500 1-1.500v-3l3-1M10 17.500l2-1 2 1" stroke="#f4501e" strokeWidth="1.200" /></I>,
  <I>
    <defs><linearGradient id="pv" x1="0" y1="1" x2="1" y2="0"><stop stopColor="#2150ff" /><stop offset=".5" stopColor="#9b3fa8" /><stop offset="1" stopColor="#ff2a2a" /></linearGradient></defs>
    <rect width="24" height="24" fill="url(#pv)" /><path d="M5.500 18.500c-1.500-6-.5-13 6.500-13 5 0 7 4 6.500 8l-1 .5v4.500H15M8 18.500c-1-4-.5-10 4-10 3.500 0 4.500 2.500 4 5.500M10.500 18.500V14c0-4 3.500-4 3.500-1 0 2-1.500 2.500-1.500 2.500l2 3" stroke="#fff" strokeWidth="1.300" />
  </I>,
  <I>
    <path d="M2 1.500Q2 0 3.500 0h17Q22 0 22 1.500V19l-10 5-10-5z" fill="#000" />
    <text transform="translate(12 12.500) scale(.85 1.650)" textAnchor="middle" fontSize="7" fontWeight="700" fill="#fff">EPIC</text>
    <text transform="translate(12 17.500)" textAnchor="middle" fontSize="4" fontWeight="700" fill="#fff">GAMES</text>
    <path d="M8.500 20h7L12 21.800z" fill="#fff" />
  </I>,
  <I>
    <defs><linearGradient id="pc" x1="0" y1="0" x2="1" y2=".6"><stop stopColor="#21d789" /><stop offset=".45" stopColor="#c9e23e" /><stop offset="1" stopColor="#e6e23e" /></linearGradient></defs>
    <rect x="1" y="1.500" width="22" height="22" fill="url(#pc)" /><rect x="4" y="4.500" width="16" height="16" fill="#000" /><text x="5.300" y="12.300" fontSize="8" fontWeight="700" fill="#fff">PC</text><path d="M6 17.500h5.500" stroke="#fff" strokeWidth="1.200" />
  </I>,
  <I>
    <defs><linearGradient id="ph" x1="0" y1="0" x2="1" y2="1"><stop stopColor="#2e6fd0" /><stop offset="1" stopColor="#2b62b8" /></linearGradient></defs>
    <rect x="1" y="1.500" width="22" height="22" rx="2" fill="url(#ph)" /><path d="M1 22l9.500-10c1-1 2-1 3 0L23 21.500c0 1.500-1 2-2 2H3c-1 0-2-.5-2-1.500z" fill="#35b2ee" /><path d="M7 23.500l7-8c1-1 1.500-1 2.500 0l6 6.500c-.5 1-1 1.500-2 1.500z" fill="#1b8ad8" /><circle cx="17" cy="5.500" r="2" fill="#fff" />
  </I>,
  <I><rect x="1" y="1" width="22" height="22" fill="#f7f7f7" /><TableauMark cx={12} cy={12} s={1.05} colors={BLUES} /></I>,
];

function Taskbar() {
  return (
    <div className="flex h-[48px] shrink-0 border-t border-[#4a4a4a] bg-[#292929] pl-[11px] font-['Open_Sans','Noto_Sans',sans-serif] text-[#f2f2f2]">
      {APPS.map((a, i) => (
        <div key={i} className="flex w-[44px] flex-col items-center pt-[3px]">
          <div className={i === 15 ? "flex h-[40px] w-[40px] flex-col items-center rounded-[4px] bg-[#383838] pt-[8px] shadow-[0_0_0_1px_#404040]" : "flex flex-col items-center pt-[8px]"}>
            {a}
            {i === 15 ? <div className="mt-[4px] h-[3px] w-[16px] rounded-full bg-[#f4765f]" /> : null}
            {i === 10 || i === 13 || i === 14 ? <div className="mt-[4px] h-[3px] w-[6px] rounded-full bg-[#9a9a9a]" /> : null}
          </div>
        </div>
      ))}
      <div className="-mt-px flex flex-1 items-center justify-end pr-[21px] text-[12px] leading-[16px]">
        <svg width="18" height="18" viewBox="0 0 18 18" fill="none"><path d="M1.500 8A7 7 0 0 1 14.500 5M15.500 1v4.500h-4.500M1.500 16v-4.500h4.500M2 12c1.500 3 3.500 4 6 4" stroke="#e6e6e6" strokeWidth="1.300" /><circle cx="12.500" cy="13" r="4" fill="#ff9f1a" /></svg>
        <div className="ml-[17px] w-[24px] pt-px text-center tracking-[-0.3px]">ENG<br />US</div>
        <svg className="ml-[18px]" width="17" height="17" viewBox="0 0 17 17" fill="none" stroke="#eee" strokeWidth="1.200"><path d="M10 1.500H1.500v11h10M15 7v8.500M4 15.500h8M5 13v2.500M10.500 13v2.500M12.500 1.500h4v4.500h-4zM13.500 1.500V0M15.500 1.500V0" /></svg>
        <svg className="ml-[7px]" width="17" height="14" viewBox="0 0 17 14" fill="none" stroke="#eee" strokeWidth="1.200"><path d="M1 4.800h2.500L7 1.500v11L3.500 9.200H1zM9 4.500c1.300 1.500 1.300 3.500 0 5M11.200 2.800c2.300 2.500 2.300 6 0 8.400" /><path d="M13.500 1c3 3.500 3 8.500 0 12" stroke="#666" /></svg>
        <svg className="ml-[7px]" width="17" height="14" viewBox="0 0 17 14" fill="none"><path d="M6 3h7.500v9H2V8" stroke="#eee" strokeWidth="1.200" /><path d="M6 4.500h6v6H3.500V8z" fill="#eee" /><path d="M14.500 5.500h2v4h-2z" fill="#eee" /><path d="M4 0L0 5.500h2.500L1.500 9 6 3.800H3.500z" fill="#eee" /></svg>
        <div className="ml-[15px] w-[64px] whitespace-nowrap text-right tracking-[-0.05px]">13:39<br />25-11-2023</div>
        <svg className="ml-[9px]" width="13" height="16" viewBox="0 0 13 16" fill="#f9a184"><path d="M6.500 0C9.500 0 11.500 2 11.500 5v4l1.500 3.500H0L1.500 9V5c0-3 2-5 5-5zM4 13.500h5c-.5 1.500-1.300 2-2.500 2s-2-.5-2.500-2z" /></svg>
      </div>
    </div>
  );
}

export default function App() {
  return (
    <div className="relative flex h-[1080px] w-[1920px] flex-col overflow-hidden bg-[#f4f4f4] font-['Inter','Liberation_Sans',sans-serif]">
      <div className="flex h-[23px] shrink-0 items-center bg-linear-to-r from-[#f3f0f5] via-[#f5f0f4] to-[#f2f2f2] pl-[2px] font-['Open_Sans','Noto_Sans',sans-serif]">
        <svg width="16" height="16" viewBox="0 0 16 16"><rect width="16" height="16" fill="#b8b8b8" /><rect width="15" height="15" fill="#fbfbfb" /><TableauMark cx={7.5} cy={7.5} s={0.8} colors={BLUES} /></svg>
        <span className="ml-[6px] flex-1 text-[12px] tracking-[-0.28px] text-[#222]">Tableau Public - Book1</span>
        <svg width="102" height="11" viewBox="0 0 102 11" fill="none" stroke="#111" className="mr-[19px]">
          <path d="M0 5.500h10" /><rect x="45.500" y="3" width="7" height="7" rx="1.200" strokeWidth="1.200" /><path d="M47.500 1h5a2 2 0 0 1 2 2v5" strokeWidth="1.200" /><path d="M91 .5l10 10M101 .5l-10 10" strokeWidth="1.200" />
        </svg>
      </div>
      <div className="flex h-[20px] shrink-0 items-center bg-white pl-[8px] pt-[2px] font-['Open_Sans','Noto_Sans',sans-serif] text-[12px] leading-[18px] tracking-[-0.4px] text-black">
        {MENU.map(([a, u, b, w]) => (
          <span key={u + b} className={w}>{a}<span className="underline underline-offset-2">{u}</span>{b}</span>
        ))}
      </div>
      <Toolbar />
      <div className="mt-px flex h-[945px] shrink-0">
        <DataPane />
        <Cards />
        <Sheet />
      </div>
      <div className="flex h-[3px] shrink-0 border-t border-[#c6c6c6] bg-[#e2e2e2]">
        <div className="ml-[130px] h-full w-[57px] border-x border-[#c6c6c6] bg-white" />
        <div className="h-full w-[57px] border-r border-[#c6c6c6]" />
        <div className="h-full w-[57px] border-r border-[#c6c6c6]" />
        <div className="h-full w-[57px] border-r border-[#c6c6c6]" />
        <div className="h-full w-[32px] border-r border-[#c6c6c6]" />
        <div className="h-full w-[32px] border-r border-[#c6c6c6]" />
        <div className="h-full w-[32px] border-r border-[#c6c6c6]" />
      </div>
      <Taskbar />
      <ShowMe />
    </div>
  );
}
